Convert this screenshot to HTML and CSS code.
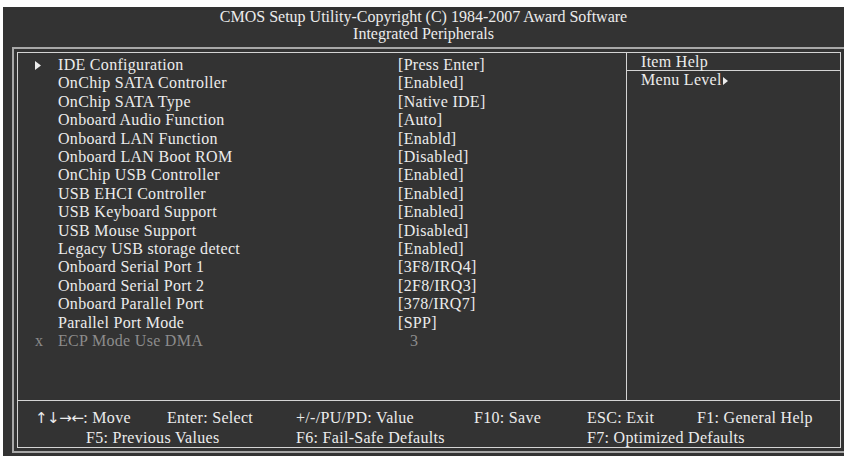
FILE: index.html
```html
<!DOCTYPE html>
<html lang="en">
<head>
    <meta charset="UTF-8">
    <meta name="viewport" content="width=device-width, initial-scale=1.0">
    <title>Integrated Peripherals</title>
    <link rel="stylesheet" href="styles.css">
</head>
<body>
    <div class="screen">
        <div class="title">
            <div>CMOS Setup Utility-Copyright (C) 1984-2007 Award Software</div>
            <div>Integrated Peripherals</div>
        </div>

        <div class="frame">
            <div class="inner">
                <div class="main">
                    <div class="items">
                        <div class="row">
                            <span class="mark">
                                <svg width="6" height="9" viewBox="0 0 6 9"><polygon points="0,0 6,4.5 0,9" fill="#ececec"/></svg>
                            </span>
                            <span class="label">IDE Configuration</span>
                            <span class="value">[Press Enter]</span>
                        </div>
                        <div class="row"><span class="mark"></span><span class="label">OnChip SATA Controller</span><span class="value">[Enabled]</span></div>
                        <div class="row"><span class="mark"></span><span class="label">OnChip SATA Type</span><span class="value">[Native IDE]</span></div>
                        <div class="row"><span class="mark"></span><span class="label">Onboard Audio Function</span><span class="value">[Auto]</span></div>
                        <div class="row"><span class="mark"></span><span class="label">Onboard LAN Function</span><span class="value">[Enabld]</span></div>
                        <div class="row"><span class="mark"></span><span class="label">Onboard LAN Boot ROM</span><span class="value">[Disabled]</span></div>
                        <div class="row"><span class="mark"></span><span class="label">OnChip USB Controller</span><span class="value">[Enabled]</span></div>
                        <div class="row"><span class="mark"></span><span class="label">USB EHCI Controller</span><span class="value">[Enabled]</span></div>
                        <div class="row"><span class="mark"></span><span class="label">USB Keyboard Support</span><span class="value">[Enabled]</span></div>
                        <div class="row"><span class="mark"></span><span class="label">USB Mouse Support</span><span class="value">[Disabled]</span></div>
                        <div class="row"><span class="mark"></span><span class="label">Legacy USB storage detect</span><span class="value">[Enabled]</span></div>
                        <div class="row"><span class="mark"></span><span class="label">Onboard Serial Port 1</span><span class="value">[3F8/IRQ4]</span></div>
                        <div class="row"><span class="mark"></span><span class="label">Onboard Serial Port 2</span><span class="value">[2F8/IRQ3]</span></div>
                        <div class="row"><span class="mark"></span><span class="label">Onboard Parallel Port</span><span class="value">[378/IRQ7]</span></div>
                        <div class="row"><span class="mark"></span><span class="label">Parallel Port Mode</span><span class="value">[SPP]</span></div>
                        <div class="row disabled"><span class="mark">x</span><span class="label">ECP Mode Use DMA</span><span class="value plain">3</span></div>
                    </div>

                    <div class="help">
                        <div class="help-title">Item Help</div>
                        <div class="help-text">Menu Level<svg class="level" width="5" height="8" viewBox="0 0 5 8"><polygon points="0,0 5,4 0,8" fill="#ececec"/></svg></div>
                    </div>
                </div>

                <div class="keys">
                    <span class="k1"><span class="arrows">↑↓→←</span>: Move</span>
                    <span>Enter: Select</span>
                    <span>+/-/PU/PD: Value</span>
                    <span>F10: Save</span>
                    <span>ESC: Exit</span>
                    <span>F1: General Help</span>
                    <span class="k5">F5: Previous Values</span>
                    <span class="k6">F6: Fail-Safe Defaults</span>
                    <span class="k7">F7: Optimized Defaults</span>
                </div>
            </div>
        </div>
    </div>
</body>
</html>
```

FILE: styles.css
```css
/* BIOS setup screen */
:root {
    --bg: #333333;
    --text: #ececec;
    --dim: #8c8c8c;
    --line: #d4d4d4;
    --outer: #a8a8a8;
}

body {
    margin: 7px 0 0 3px;
    background: #ffffff;
    font-family: "Liberation Serif", "Times New Roman", serif;
}

.screen {
    height: 449px;
    background: var(--bg);
    color: var(--text);
    overflow: hidden;
}

.title {
    text-align: center;
    font-size: 16px;
    line-height: 17px;
    height: 40px;
    padding-top: 1px;
    box-sizing: border-box;
}

.frame {
    width: 824px;
    margin-left: 9px;
    border: 2px solid var(--outer);
    padding: 3px;
}

.inner {
    border: 1px solid var(--line);
    font-size: 16px;
    letter-spacing: 0.3px;
}

.main {
    display: flex;
    height: 347px;
    border-bottom: 1px solid var(--line);
}

.items {
    width: 591px;
    padding: 3px 0 0 17px;
    border-right: 1px solid var(--line);
}

.row {
    display: flex;
    line-height: 18.4px;
    white-space: nowrap;
}

.mark {
    width: 23px;
    display: flex;
    align-items: center;
}

.label {
    width: 340px;
}

.value.plain {
    padding-left: 12px;
}

.disabled {
    color: var(--dim);
}

.help {
    flex: 1;
}

.help-title {
    line-height: 17px;
    padding-left: 14px;
    border-bottom: 1px solid var(--line);
}

.help-text {
    line-height: 18px;
    padding-left: 14px;
}

.level {
    margin-left: 1px;
}

.keys {
    display: grid;
    grid-template-columns: 51px 81px 129px 178px 113px 110px auto;
    line-height: 20px;
    padding: 7px 0 0 17px;
    height: 39px;
    white-space: nowrap;
}

.k1 {
    grid-column: 1 / 3;
}

.arrows {
    font-family: "DejaVu Sans", sans-serif;
    font-size: 15px;
    letter-spacing: -0.5px;
}

.k5 {
    grid-column: 2 / 4;
}

.k6 {
    grid-column: 4 / 6;
}

.k7 {
    grid-column: 6 / 8;
}
```
